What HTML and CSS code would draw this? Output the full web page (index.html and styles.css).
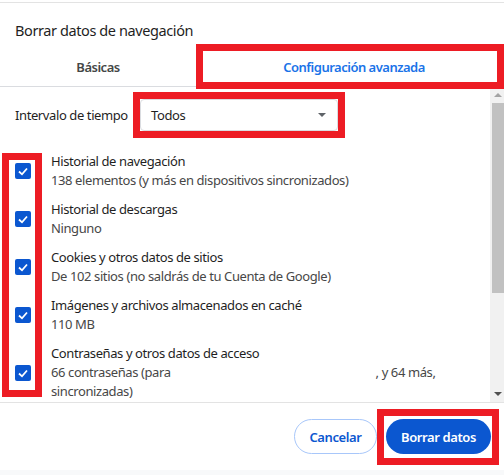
FILE: index.html
```html
<!DOCTYPE html>
<html lang="es">
<head>
    <meta charset="UTF-8">
    <title>Borrar datos de navegación</title>
    <link rel="stylesheet" href="styles.css">
</head>
<body>
<div class="dialog">
    <h1 class="title">Borrar datos de navegación</h1>
    <div class="tabs">
        <div class="tab">Básicas</div>
        <div class="tab tab-active">Configuración avanzada</div>
    </div>
    <div class="main">
        <div class="content">
            <div class="range">
                <span class="range-label">Intervalo de tiempo</span>
                <div class="select">
                    <span>Todos</span>
                    <span class="caret"></span>
                </div>
            </div>
            <ul class="items">
                <li class="item">
                    <span class="check"><svg viewBox="0 0 16 16"><polyline points="4,8.5 7,11.3 12,5.5"/></svg></span>
                    <div class="item-text">
                        <div class="item-title">Historial de navegación</div>
                        <div class="item-sub">138 elementos (y más en dispositivos sincronizados)</div>
                    </div>
                </li>
                <li class="item">
                    <span class="check"><svg viewBox="0 0 16 16"><polyline points="4,8.5 7,11.3 12,5.5"/></svg></span>
                    <div class="item-text">
                        <div class="item-title">Historial de descargas</div>
                        <div class="item-sub">Ninguno</div>
                    </div>
                </li>
                <li class="item">
                    <span class="check"><svg viewBox="0 0 16 16"><polyline points="4,8.5 7,11.3 12,5.5"/></svg></span>
                    <div class="item-text">
                        <div class="item-title">Cookies y otros datos de sitios</div>
                        <div class="item-sub">De 102 sitios (no saldrás de tu Cuenta de Google)</div>
                    </div>
                </li>
                <li class="item">
                    <span class="check"><svg viewBox="0 0 16 16"><polyline points="4,8.5 7,11.3 12,5.5"/></svg></span>
                    <div class="item-text">
                        <div class="item-title">Imágenes y archivos almacenados en caché</div>
                        <div class="item-sub">110 MB</div>
                    </div>
                </li>
                <li class="item">
                    <span class="check"><svg viewBox="0 0 16 16"><polyline points="4,8.5 7,11.3 12,5.5"/></svg></span>
                    <div class="item-text">
                        <div class="item-title">Contraseñas y otros datos de acceso</div>
                        <div class="item-sub sub-split">
                            <span>66 contraseñas (para</span>
                            <span>, y 64 más,</span>
                        </div>
                        <div class="item-sub">sincronizadas)</div>
                    </div>
                </li>
            </ul>
        </div>
        <div class="scrollbar">
            <span class="arrow arrow-up"></span>
            <div class="thumb"></div>
            <div class="track"></div>
            <span class="arrow arrow-down"></span>
        </div>
    </div>
    <div class="footer">
        <button class="btn btn-outline">Cancelar</button>
        <button class="btn btn-primary">Borrar datos</button>
    </div>
    <div class="strip"></div>

    <!-- marcas rojas -->
    <div class="mark mark-tab"></div>
    <div class="mark mark-select"></div>
    <div class="mark mark-checks"></div>
    <div class="mark mark-button"></div>
</div>
</body>
</html>
```

FILE: styles.css
```css
* {
    margin: 0;
    padding: 0;
    box-sizing: border-box;
}

html,
body {
    width: 504px;
    height: 475px;
    overflow: hidden;
    background: #fff;
}

body {
    font-family: "Noto Sans", "Open Sans", sans-serif;
    font-size: 13px;
    letter-spacing: -0.4px;
    color: #1f1f1f;
}

ul {
    list-style: none;
}

.dialog {
    position: relative;
    margin-top: 2px;
    height: 473px;
    border-top: 1px solid #e3e3e3;
    display: flex;
    flex-direction: column;
}

.title {
    padding: 17px 15px 0;
    height: 37px;
    font-size: 14.5px;
    font-weight: 400;
    line-height: 20px;
    letter-spacing: -0.4px;
    color: #1f1f1f;
}

.tabs {
    margin-top: 7px;
    height: 40px;
    display: flex;
    border-bottom: 1px solid #dadce0;
}

.tab {
    display: flex;
    align-items: center;
    justify-content: center;
    font-weight: 600;
    letter-spacing: -0.5px;
    color: #444746;
}

.tab:first-child {
    width: 196px;
}

.tab-active {
    flex: 1;
    padding-left: 8px;
    color: #1a73e8;
}

.main {
    height: 316px;
    display: flex;
    border-bottom: 1px solid #e3e3e3;
}

.content {
    flex: 1;
    overflow: hidden;
    padding-top: 12px;
}

.range {
    display: flex;
    align-items: center;
    padding-left: 15px;
}

.range-label {
    width: 125px;
    color: #1f1f1f;
}

.select {
    width: 198px;
    height: 32px;
    border: 1px solid #dadce0;
    border-radius: 4px;
    display: flex;
    align-items: center;
    justify-content: space-between;
    padding: 0 11px 0 10px;
}

.caret {
    width: 0;
    height: 0;
    border-left: 4px solid transparent;
    border-right: 4px solid transparent;
    border-top: 4px solid #5f6368;
}

.items {
    margin-top: 21px;
    display: flex;
    flex-direction: column;
    gap: 10px;
}

.item {
    display: flex;
    align-items: center;
    padding-left: 15px;
    line-height: 19px;
}

.check {
    flex: none;
    width: 16px;
    height: 16px;
    border-radius: 2px;
    background: #0b57d0;
    margin-right: 20px;
    display: flex;
}

.check svg {
    width: 16px;
    height: 16px;
    fill: none;
    stroke: #fff;
    stroke-width: 1.8;
}

.item-text {
    color: #1f1f1f;
}

.item-sub {
    color: #474747;
}

.sub-split {
    display: flex;
    gap: 205px;
}

.scrollbar {
    width: 14px;
    background: #f1f1f1;
    display: flex;
    flex-direction: column;
    align-items: flex-end;
}

.arrow {
    width: 12px;
    height: 16px;
    display: flex;
    align-items: center;
    justify-content: center;
}

.arrow::before {
    content: "";
    border-left: 4px solid transparent;
    border-right: 4px solid transparent;
}

.arrow-up::before {
    border-bottom: 4px solid #a3a3a3;
}

.arrow-down::before {
    border-top: 4px solid #505050;
}

.thumb {
    width: 12px;
    height: 190px;
    background: #c1c1c1;
}

.track {
    flex: 1;
}

.footer {
    height: 67px;
    display: flex;
    justify-content: flex-end;
    align-items: flex-start;
    gap: 9px;
    padding: 16px 13px 0 0;
}

.btn {
    height: 35px;
    border-radius: 18px;
    font-family: "Noto Sans", "Open Sans", sans-serif;
    font-size: 13px;
    font-weight: 600;
    letter-spacing: -0.4px;
    cursor: pointer;
}

.btn-outline {
    width: 83px;
    border: 1px solid #a8c7fa;
    background: #fff;
    color: #0b57d0;
}

.btn-primary {
    width: 105px;
    border: none;
    background: #0b57d0;
    color: #fff;
}

.strip {
    flex: 1;
    background: #f8f9fa;
}

.mark {
    position: absolute;
    border: 7px solid #ed1c24;
}

.mark-tab {
    left: 196px;
    top: 41px;
    width: 308px;
    height: 45px;
}

.mark-select {
    left: 133px;
    top: 89px;
    width: 212px;
    height: 46px;
}

.mark-checks {
    left: 2px;
    top: 150px;
    width: 40px;
    height: 244px;
}

.mark-button {
    left: 377px;
    top: 406px;
    width: 122px;
    height: 56px;
}
```
